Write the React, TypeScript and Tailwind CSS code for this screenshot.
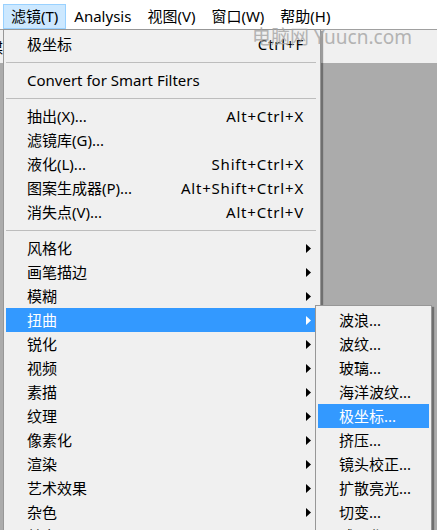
import React from 'react';

type Item =
  | { kind: 'sep' }
  | { kind: 'item'; label: string; shortcut?: string; sub?: boolean; active?: boolean };

const mainItems: Item[] = [
  { kind: 'item', label: '极坐标', shortcut: 'Ctrl+F' },
  { kind: 'sep' },
  { kind: 'item', label: 'Convert for Smart Filters' },
  { kind: 'sep' },
  { kind: 'item', label: '抽出(X)...', shortcut: 'Alt+Ctrl+X' },
  { kind: 'item', label: '滤镜库(G)...' },
  { kind: 'item', label: '液化(L)...', shortcut: 'Shift+Ctrl+X' },
  { kind: 'item', label: '图案生成器(P)...', shortcut: 'Alt+Shift+Ctrl+X' },
  { kind: 'item', label: '消失点(V)...', shortcut: 'Alt+Ctrl+V' },
  { kind: 'sep' },
  { kind: 'item', label: '风格化', sub: true },
  { kind: 'item', label: '画笔描边', sub: true },
  { kind: 'item', label: '模糊', sub: true },
  { kind: 'item', label: '扭曲', sub: true, active: true },
  { kind: 'item', label: '锐化', sub: true },
  { kind: 'item', label: '视频', sub: true },
  { kind: 'item', label: '素描', sub: true },
  { kind: 'item', label: '纹理', sub: true },
  { kind: 'item', label: '像素化', sub: true },
  { kind: 'item', label: '渲染', sub: true },
  { kind: 'item', label: '艺术效果', sub: true },
  { kind: 'item', label: '杂色', sub: true },
  { kind: 'item', label: '其它', sub: true },
];

const distortItems = [
  '波浪...',
  '波纹...',
  '玻璃...',
  '海洋波纹...',
  '极坐标...',
  '挤压...',
  '镜头校正...',
  '扩散亮光...',
  '切变...',
  '球面化...',
  '水波...',
];

const menuBar = ['滤镜(T)', 'Analysis', '视图(V)', '窗口(W)', '帮助(H)'];

function Arrow({ white }: { white?: boolean }) {
  return (
    <svg width="5" height="9" viewBox="0 0 5 9" className="block">
      <polygon points="0,0 5,4.5 0,9" fill={white ? '#ffffff' : '#000000'} />
    </svg>
  );
}

export default function App() {
  return (
    <div
      className="relative w-[437px] h-[530px] overflow-hidden bg-[#ababab] text-[15px] text-black"
      style={{ fontFamily: '"Noto Sans", "Noto Sans CJK SC", sans-serif' }}
    >
      {/* menu bar */}
      <div className="h-[29px] bg-white flex items-end pl-[3px]">
        {menuBar.map((m, i) => (
          <div
            key={m}
            className={
              i === 0
                ? 'h-[25px] flex items-center px-[7px] bg-[#cce8ff] border border-[#99d1ff] leading-none'
                : 'h-[25px] flex items-center px-[8px] leading-none'
            }
          >
            <span className="-mt-[1px]">{m}</span>
          </div>
        ))}
      </div>

      {/* toolbar strip under the bar */}
      <div className="h-[34px] bg-[#f0f0f0] border-t border-[#a0a0a0] relative">
        <span className="absolute left-[-11px] top-[7px] text-[14px]">媒</span>
      </div>

      {/* main dropdown */}
      <div className="absolute left-[3px] top-[29px] w-[318px] bg-[#f0f0f0] border border-[#979797] shadow-[2px_2px_1px_rgba(0,0,0,0.35)] pl-[2px] pr-[4px] pt-[2px] pb-[2px]">
        {mainItems.map((it, i) =>
          it.kind === 'sep' ? (
            <div key={i} className="h-[12px] flex items-center">
              <div className="w-full h-px bg-[#bdbdbd]" />
            </div>
          ) : (
            <div
              key={i}
              className={
                it.active
                  ? 'h-[24px] flex items-center pl-[21px] bg-[#3399ff] text-white'
                  : 'h-[24px] flex items-center pl-[21px]'
              }
            >
              <span className="flex-1 whitespace-nowrap">{it.label}</span>
              {it.shortcut && (
                <span className="whitespace-nowrap tracking-[0.8px] -mr-[1px]">{it.shortcut}</span>
              )}
              <span className="w-[13px] flex items-center pl-[3px]">
                {it.sub && <Arrow white={it.active} />}
              </span>
            </div>
          )
        )}
      </div>

      {/* distort submenu */}
      <div className="absolute left-[315px] top-[305px] w-[117px] bg-[#f0f0f0] border border-[#979797] shadow-[2px_2px_1px_rgba(0,0,0,0.35)] px-[2px] pt-[2px]">
        {distortItems.map((d, i) => (
          <div
            key={d}
            className={
              i === 4
                ? 'h-[24px] flex items-center pl-[21px] bg-[#3399ff] text-white whitespace-nowrap'
                : 'h-[24px] flex items-center pl-[21px] whitespace-nowrap'
            }
          >
            {d}
          </div>
        ))}
      </div>

      {/* watermark */}
      <div className="absolute left-[252px] top-[25px] text-[19px] leading-[24px] text-[#a4a4a4] opacity-80 whitespace-nowrap pointer-events-none">
        电脑网 Yuucn.com
      </div>
    </div>
  );
}
